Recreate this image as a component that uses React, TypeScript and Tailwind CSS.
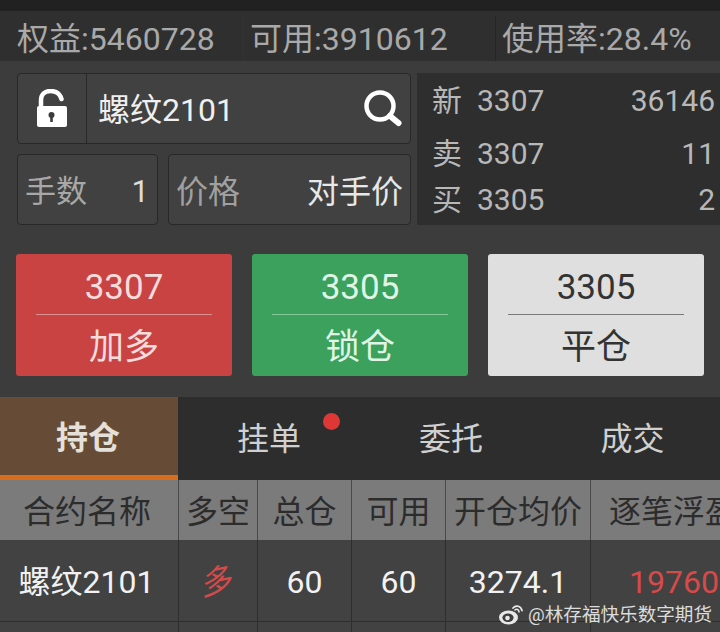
import React from "react";

const font = { fontFamily: "Roboto, 'Noto Sans CJK SC', sans-serif" };

function Lock() {
  return (
    <svg width="32" height="40" viewBox="0 0 32 40" fill="none">
      <path d="M5 18 V11 C5 5 9.5 2 14.5 2 C20 2 24 5 25.5 10" stroke="#fff" strokeWidth="4.5" strokeLinecap="round" />
      <rect x="1" y="17" width="30" height="21" rx="2" fill="#fff" />
      <circle cx="15.5" cy="26" r="3" fill="#3c3c3c" />
      <rect x="14.2" y="27" width="2.6" height="6" fill="#3c3c3c" />
    </svg>
  );
}

function Search() {
  return (
    <svg width="38" height="38" viewBox="0 0 38 38" fill="none">
      <circle cx="16" cy="16" r="13.5" stroke="#fff" strokeWidth="4.5" />
      <path d="M26 26 L34.5 33" stroke="#fff" strokeWidth="6" strokeLinecap="round" />
    </svg>
  );
}

function Weibo() {
  return (
    <svg width="26" height="24" viewBox="0 0 26 24" fill="none">
      <ellipse cx="10.5" cy="15.5" rx="9.5" ry="7" fill="#e8e8e8" />
      <ellipse cx="10" cy="15.8" rx="5.6" ry="4.2" fill="#3c3c3c" />
      <circle cx="9.5" cy="16" r="2.3" fill="#e8e8e8" />
      <path d="M15 6 C18 2.5 23 4 24 8.5" stroke="#e8e8e8" strokeWidth="1.8" strokeLinecap="round" />
      <path d="M17 8 C18.5 6.6 21 7.5 21 10" stroke="#e8e8e8" strokeWidth="1.6" strokeLinecap="round" />
    </svg>
  );
}

function Quote({ a, b, c, h }: { a: string; b: string; c: string; h: string }) {
  return (
    <div className={`flex items-center pl-[15px] pr-[5px] text-[30px] text-[#b8b8b8] ${h}`}>
      <span className="w-[45px]">{a}</span>
      <span>{b}</span>
      <span className="ml-auto">{c}</span>
    </div>
  );
}

function Action({ price, label, box, line }: { price: string; label: string; box: string; line: string }) {
  return (
    <div className={`flex h-[122px] w-[216px] flex-col items-center rounded-[3px] ${box}`}>
      <div className="flex h-[60px] items-center pt-[6px] text-[35px] leading-none">{price}</div>
      <div className={`h-px w-[176px] ${line}`} />
      <div className="flex h-[61px] items-center pt-[4px] text-[35px] leading-none">{label}</div>
    </div>
  );
}

function HeadCell({ w, children }: { w: string; children: React.ReactNode }) {
  return (
    <div className={`flex h-full shrink-0 items-center justify-center overflow-hidden whitespace-nowrap border-r border-[#4a4a4a] pt-[3px] text-[32px] text-[#2c2c2c] ${w}`}>
      {children}
    </div>
  );
}

function BodyCell({ w, cls, children }: { w: string; cls?: string; children?: React.ReactNode }) {
  return (
    <div className={`flex h-full shrink-0 items-center justify-center overflow-hidden whitespace-nowrap border-r border-[#2e2e2e] pt-[3px] text-[32px] ${cls ?? "text-[#f2f2f2]"} ${w}`}>
      {children}
    </div>
  );
}

export default function App() {
  return (
    <div style={font} className="relative flex h-[632px] w-[720px] flex-col overflow-hidden bg-[#3c3c3c]">
      <div className="h-[11px] shrink-0 bg-[#212121]" />
      <div className="flex h-[50px] shrink-0 bg-[#2f2f2f] pt-[5px] text-[32px] text-[#a9a9a9]">
        <div className="flex w-[244px] items-center whitespace-nowrap border-r border-[#333] pl-[17px]">权益:5460728</div>
        <div className="flex w-[252px] items-center whitespace-nowrap border-r border-[#262626] pl-[6px]">可用:3910612</div>
        <div className="flex flex-1 items-center whitespace-nowrap pl-[6px]">使用率:28.4%</div>
      </div>

      <div className="flex shrink-0 pl-[17px] pt-[12px]">
        <div className="flex w-[394px] flex-col gap-[10px]">
          <div className="flex h-[71px] rounded-[4px] border border-[#282828] bg-[#414141]">
            <div className="flex w-[69px] items-center justify-center border-r border-[#282828]">
              <Lock />
            </div>
            <div className="flex flex-1 items-center pl-[11px] pr-[8px] text-[32px] text-[#f0f0f0]">
              <span className="pt-[2px]">螺纹2101</span>
              <span className="ml-auto flex">
                <Search />
              </span>
            </div>
          </div>
          <div className="flex h-[71px] gap-[10px]">
            <div className="flex w-[141px] items-center justify-between rounded-[4px] border border-[#282828] bg-[#414141] pl-[7px] pr-[8px] pt-[5px] text-[31px]">
              <span className="text-[#a8a8a8]">手数</span>
              <span className="text-[#dcdcdc]">1</span>
            </div>
            <div className="flex flex-1 items-center justify-between rounded-[4px] border border-[#282828] bg-[#414141] pl-[7px] pr-[7px] pt-[5px] text-[32px]">
              <span className="text-[#a0a0a0]">价格</span>
              <span className="text-[#e8e8e8]">对手价</span>
            </div>
          </div>
        </div>
        <div className="ml-[6px] flex h-[152px] flex-1 flex-col bg-[#2e2e2e]">
          <Quote a="新" b="3307" c="36146" h="h-[55px]" />
          <Quote a="卖" b="3307" c="11" h="h-[50px]" />
          <Quote a="买" b="3305" c="2" h="h-[42px]" />
        </div>
      </div>

      <div className="flex shrink-0 gap-[20px] pl-[16px] pt-[29px]">
        <Action price="3307" label="加多" box="bg-[#c94343] text-[#f5dcdc]" line="bg-[#de9090]" />
        <Action price="3305" label="锁仓" box="bg-[#3ba15d] text-[#dff5e6]" line="bg-[#85c99b]" />
        <Action price="3305" label="平仓" box="bg-[#dfdfdf] text-[#333333]" line="bg-[#7a7a7a]" />
      </div>

      <div className="mt-[21px] flex h-[83px] shrink-0 bg-[#2d2d2d] text-[32px] text-[#d0d0d0]">
        <div className="flex w-[178px] items-center justify-center border-b-[5px] border-[#d96d1c] bg-[#664c37] pr-[2px] pt-[4px] font-bold text-[#e6e0da]">持仓</div>
        <div className="relative flex w-[182px] items-center justify-center">
          挂单
          <span className="absolute left-[145px] top-[16px] h-[17px] w-[17px] rounded-full bg-[#df3636]" />
        </div>
        <div className="flex w-[182px] items-center justify-center">委托</div>
        <div className="flex w-[178px] items-center justify-center pl-[3px]">成交</div>
      </div>

      <div className="flex h-[60px] shrink-0 bg-[#7b7b7b]">
        <HeadCell w="w-[179px] pr-[4px]">合约名称</HeadCell>
        <HeadCell w="w-[79px]">多空</HeadCell>
        <HeadCell w="w-[94px]">总仓</HeadCell>
        <HeadCell w="w-[94px]">可用</HeadCell>
        <HeadCell w="w-[145px]">开仓均价</HeadCell>
        <div className="flex h-full flex-1 items-center overflow-hidden whitespace-nowrap pl-[18px] pt-[3px] text-[32px] text-[#2c2c2c]">逐笔浮盈</div>
      </div>
      <div className="flex h-[82px] shrink-0 border-b border-[#2e2e2e] bg-[#424242]">
        <BodyCell w="w-[179px] pr-[5px]">螺纹2101</BodyCell>
        <BodyCell w="w-[79px] pr-[6px]" cls="text-[#d84a4a]">
          <span className="-rotate-12 italic">多</span>
        </BodyCell>
        <BodyCell w="w-[94px]">60</BodyCell>
        <BodyCell w="w-[94px]">60</BodyCell>
        <BodyCell w="w-[145px]">3274.1</BodyCell>
        <div className="flex h-full flex-1 items-center overflow-hidden whitespace-nowrap pl-[38px] pt-[3px] text-[32px] text-[#d84a4a]">19760</div>
      </div>
      <div className="flex flex-1 bg-[#424242]">
        <BodyCell w="w-[179px]" />
        <BodyCell w="w-[79px]" />
        <BodyCell w="w-[94px]" />
        <BodyCell w="w-[94px]" />
        <BodyCell w="w-[145px]" />
      </div>

      <div className="absolute left-[498px] top-[602px] flex items-center gap-[4px] text-[18.6px] leading-none text-[#dcdcdc]">
        <Weibo />
        <span className="pt-[2px]">@林存福快乐数字期货</span>
      </div>
    </div>
  );
}
